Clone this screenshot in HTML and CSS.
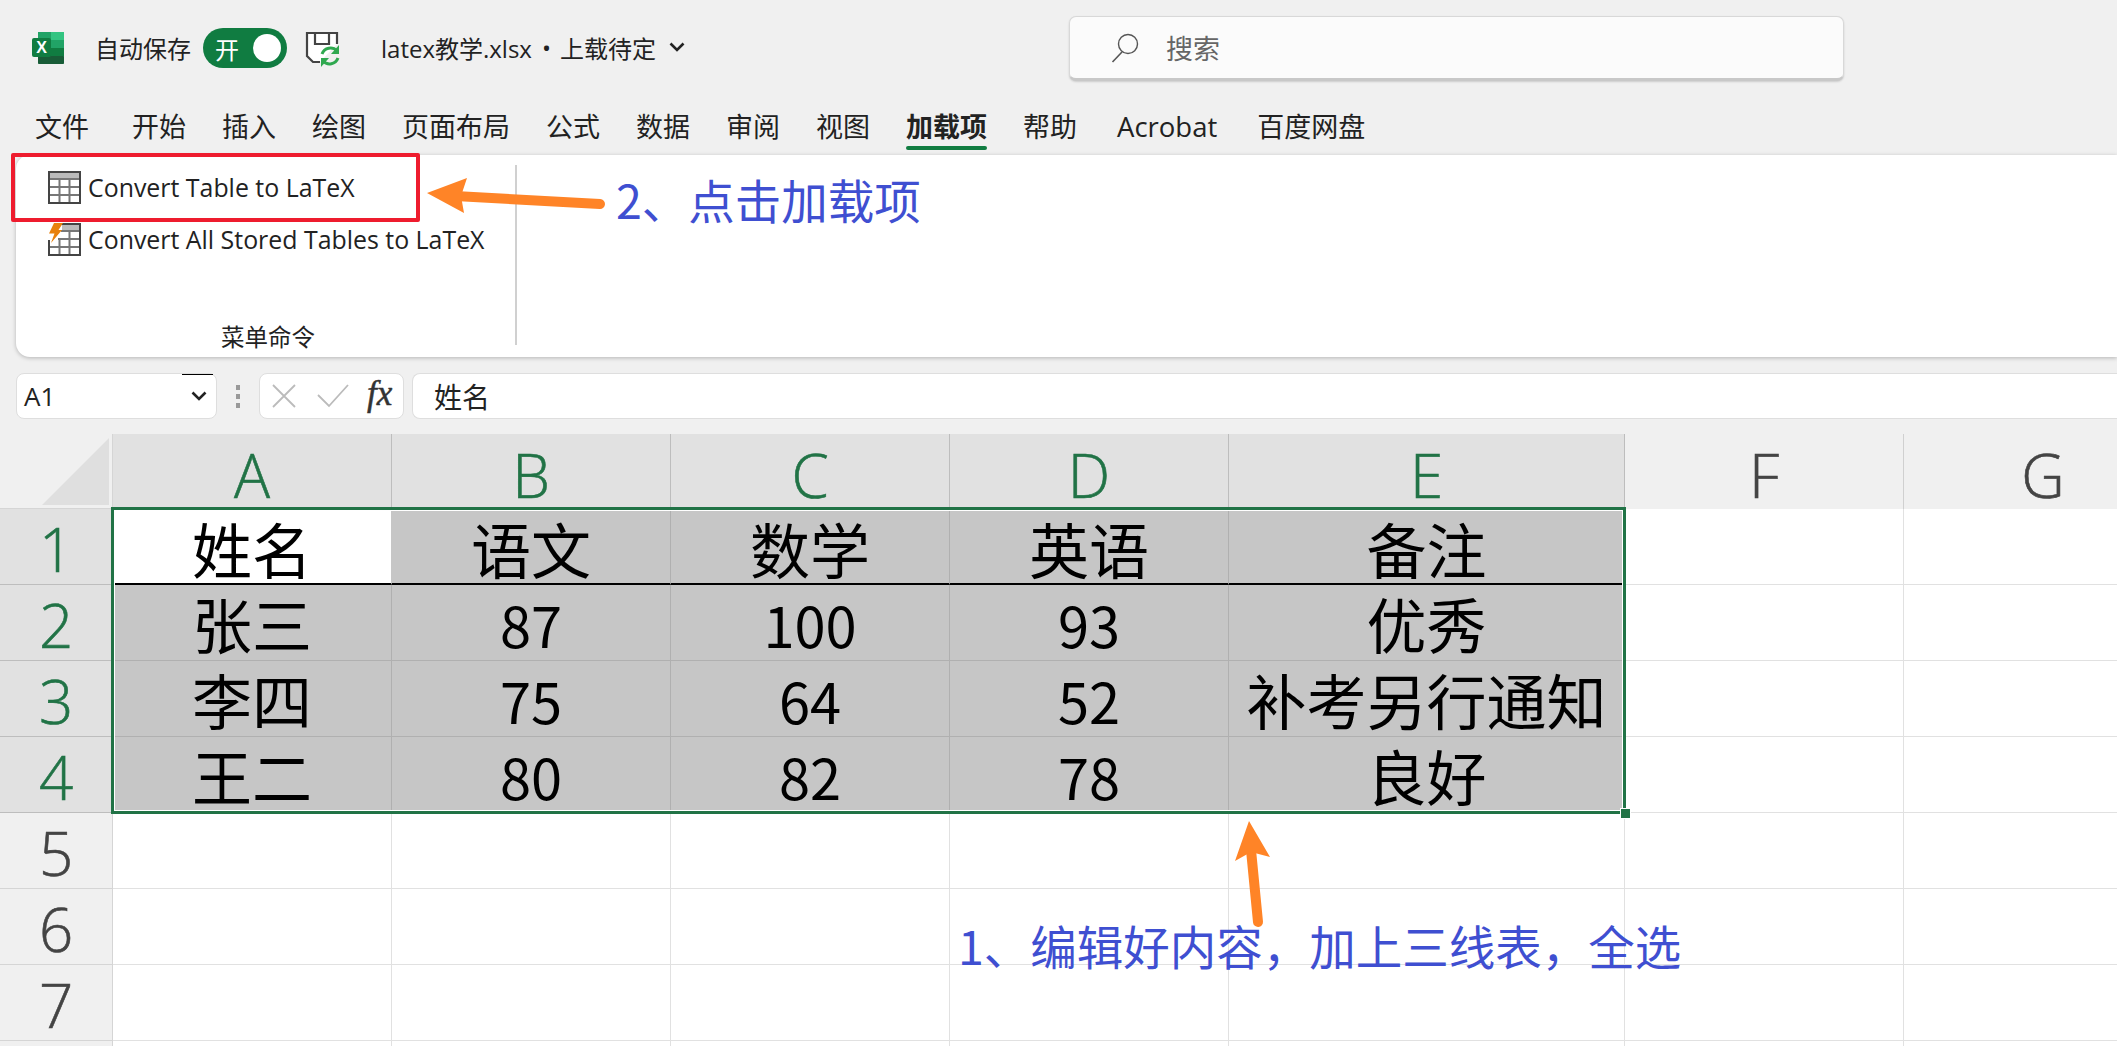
FILE: index.html
```html
<!DOCTYPE html>
<html lang="zh-CN">
<head>
    <meta charset="UTF-8">
    <title>latex教学.xlsx</title>
    <link rel="stylesheet" href="styles.css">
</head>
<body>
<div class="page">
    <header class="titlebar">
        <svg class="icon-excel" viewBox="0 0 32 32">
            <rect x="6" y="0" width="26" height="32" rx="2" fill="#21a366"/>
            <rect x="19" y="0" width="13" height="8" fill="#33c481"/>
            <rect x="6" y="0" width="13" height="8" fill="#21a366"/>
            <rect x="19" y="8" width="13" height="8" fill="#21a366"/>
            <rect x="6" y="8" width="13" height="8" fill="#107c41"/>
            <rect x="19" y="16" width="13" height="8" fill="#107c41"/>
            <rect x="6" y="16" width="13" height="8" fill="#185c37"/>
            <rect x="6" y="24" width="26" height="8" rx="1" fill="#185c37"/>
            <rect x="0" y="6" width="19" height="19" rx="2" fill="#107c41"/>
            <text x="9.5" y="21" class="excel-x">X</text>
        </svg>
        <span class="title-text autosave">自动保存</span>
        <div class="toggle"><span>开</span><i class="knob"></i></div>
        <svg class="icon-save" viewBox="0 0 48 48">
            <path d="M21 38H14L8 32V9H38V20" fill="#fff" stroke="#444" stroke-width="2.2"/>
            <path d="M16 9V20H30V9" fill="none" stroke="#444" stroke-width="2.2"/>
            <path d="M23 30A9 9 0 0 1 38 27" fill="none" stroke="#2fa84f" stroke-width="3"/>
            <path d="M40 21V30H32Z" fill="#2fa84f"/>
            <path d="M39 34A9 9 0 0 1 24 37" fill="none" stroke="#2fa84f" stroke-width="3"/>
            <path d="M22 43V34H30Z" fill="#2fa84f"/>
        </svg>
        <span class="title-text filename">latex教学.xlsx</span>
        <span class="title-text dot">•</span>
        <span class="title-text status">上载待定</span>
        <svg class="chevron" viewBox="0 0 16 10"><path d="M1.5 1.5L8 8L14.5 1.5" fill="none" stroke="#222" stroke-width="2.6"/></svg>
        <div class="search">
            <svg class="icon-search" viewBox="0 0 28 30">
                <circle cx="17" cy="11" r="9.5" fill="none" stroke="#555" stroke-width="1.4"/>
                <path d="M11 19L1.5 29" stroke="#555" stroke-width="1.6"/>
            </svg>
            <span>搜索</span>
        </div>
    </header>

    <nav class="tabs">
        <span class="tab tab-first">文件</span>
        <span class="tab">开始</span>
        <span class="tab">插入</span>
        <span class="tab">绘图</span>
        <span class="tab">页面布局</span>
        <span class="tab">公式</span>
        <span class="tab">数据</span>
        <span class="tab">审阅</span>
        <span class="tab">视图</span>
        <span class="tab tab-active">加载项</span>
        <span class="tab">帮助</span>
        <span class="tab tab-latin">Acrobat</span>
        <span class="tab">百度网盘</span>
    </nav>

    <section class="ribbon">
        <div class="group">
            <div class="command">
                <svg class="icon-table" viewBox="0 0 33 33">
                    <rect x="1" y="1" width="31" height="31" fill="#fff" stroke="#444" stroke-width="2"/>
                    <rect x="2" y="2" width="29" height="5" fill="#bbb"/>
                    <path d="M2 8H31M2 16H31M2 24H31M11.500 8V31M21.500 8V31" stroke="#777" stroke-width="2"/>
                </svg>
                <span>Convert Table to LaTeX</span>
            </div>
            <div class="command">
                <svg class="icon-table" viewBox="0 0 33 33">
                    <path d="M12 1H32V32H1V17" fill="#fff" stroke="#444" stroke-width="2"/>
                    <rect x="14" y="2" width="17" height="5" fill="#bbb"/>
                    <path d="M2 24H31M10 16H31M13 8H31M11.500 16V31M21.500 8V31" stroke="#777" stroke-width="2"/>
                    <path d="M6 0H15L10.500 7H14L3 20L6.500 10.500H1Z" fill="#e8810c"/>
                </svg>
                <span>Convert All Stored Tables to LaTeX</span>
            </div>
            <div class="group-label">菜单命令</div>
        </div>
    </section>

    <div class="formula-bar">
        <div class="namebox">
            <span>A1</span>
            <svg class="namebox-arrow" viewBox="0 0 16 10"><path d="M1.500 1.500L8 8L14.500 1.500" fill="none" stroke="#222" stroke-width="2.6"/></svg>
        </div>
        <div class="grip"><i></i><i></i><i></i></div>
        <div class="fx-box">
            <svg class="fx-icon" viewBox="0 0 24 24"><path d="M1 1L23 23M23 1L1 23" stroke="#bbb" stroke-width="1.8"/></svg>
            <svg class="fx-icon" viewBox="0 0 32 24"><path d="M1 11L12 22L31 1" fill="none" stroke="#bbb" stroke-width="1.8"/></svg>
            <span class="fx-label">fx</span>
        </div>
        <div class="formula-input">姓名</div>
    </div>

    <main class="sheet">
        <div class="corner"><i class="corner-mark"></i></div>
        <div class="col col-on">A</div>
        <div class="col col-on">B</div>
        <div class="col col-on">C</div>
        <div class="col col-on">D</div>
        <div class="col col-on">E</div>
        <div class="col">F</div>
        <div class="col">G</div>

        <div class="row row-on">1</div>
        <div class="cell cell-first head">姓名</div>
        <div class="cell cell-sel head">语文</div>
        <div class="cell cell-sel head">数学</div>
        <div class="cell cell-sel head">英语</div>
        <div class="cell cell-sel head">备注</div>
        <div class="cell"></div>
        <div class="cell"></div>

        <div class="row row-on">2</div>
        <div class="cell cell-sel">张三</div>
        <div class="cell cell-sel num">87</div>
        <div class="cell cell-sel num">100</div>
        <div class="cell cell-sel num">93</div>
        <div class="cell cell-sel">优秀</div>
        <div class="cell"></div>
        <div class="cell"></div>

        <div class="row row-on">3</div>
        <div class="cell cell-sel">李四</div>
        <div class="cell cell-sel num">75</div>
        <div class="cell cell-sel num">64</div>
        <div class="cell cell-sel num">52</div>
        <div class="cell cell-sel">补考另行通知</div>
        <div class="cell"></div>
        <div class="cell"></div>

        <div class="row row-on">4</div>
        <div class="cell cell-sel">王二</div>
        <div class="cell cell-sel num">80</div>
        <div class="cell cell-sel num">82</div>
        <div class="cell cell-sel num">78</div>
        <div class="cell cell-sel">良好</div>
        <div class="cell"></div>
        <div class="cell"></div>

        <div class="row">5</div>
        <div class="cell"></div><div class="cell"></div><div class="cell"></div><div class="cell"></div><div class="cell"></div><div class="cell"></div><div class="cell"></div>
        <div class="row">6</div>
        <div class="cell"></div><div class="cell"></div><div class="cell"></div><div class="cell"></div><div class="cell"></div><div class="cell"></div><div class="cell"></div>
        <div class="row">7</div>
        <div class="cell"></div><div class="cell"></div><div class="cell"></div><div class="cell"></div><div class="cell"></div><div class="cell"></div><div class="cell"></div>
        <div class="row"></div>
        <div class="cell"></div><div class="cell"></div><div class="cell"></div><div class="cell"></div><div class="cell"></div><div class="cell"></div><div class="cell"></div>

        <div class="selection"><i class="handle"></i></div>
    </main>

    <!-- annotations drawn on top of the screenshot -->
    <div class="red-box"></div>
    <svg class="arrows" viewBox="0 0 2117 1046">
        <path d="M600 204L455 196" stroke="#ff8427" stroke-width="10" stroke-linecap="round"/>
        <path d="M427 193L467 178L461 196L464 213Z" fill="#ff8427"/>
        <path d="M1258 922L1251 850" stroke="#ff8427" stroke-width="10" stroke-linecap="round"/>
        <path d="M1249 821L1270 857L1251 852L1235 861Z" fill="#ff8427"/>
    </svg>
    <div class="note note-two">2、点击加载项</div>
    <div class="note note-one">1、编辑好内容，加上三线表，全选</div>
</div>
</body>
</html>
```
FILE: styles.css
```css
* {
    margin: 0;
    padding: 0;
    box-sizing: border-box;
}

html, body {
    height: 100%;
    overflow: hidden;
}

body {
    font-family: 'Open Sans', 'Noto Sans CJK SC', sans-serif;
    background: #f0f0f0;
    color: #222;
}

.page {
    position: relative;
    width: 2117px;
    height: 1046px;
    overflow: hidden;
}

/* title bar */
.titlebar {
    display: flex;
    align-items: center;
    height: 96px;
    padding-left: 32px;
    font-size: 24px;
}

.title-text {
    margin-top: -2px;
}

.icon-excel {
    width: 32px;
    height: 32px;
}

.excel-x {
    font-family: 'Liberation Sans', sans-serif;
    font-size: 16px;
    font-weight: bold;
    fill: #fff;
    text-anchor: middle;
}

.autosave {
    margin-left: 31px;
}

.toggle {
    display: flex;
    align-items: center;
    justify-content: space-between;
    width: 84px;
    height: 40px;
    margin-left: 12px;
    padding: 0 6px 0 12px;
    border-radius: 20px;
    background: #107c41;
    color: #fff;
}

.knob {
    width: 28px;
    height: 28px;
    border-radius: 50%;
    background: #fff;
}

.icon-save {
    width: 48px;
    height: 48px;
    margin-left: 12px;
}

.filename {
    margin-left: 34px;
}

.dot {
    margin-left: 10px;
}

.status {
    margin-left: 9px;
}

.chevron {
    width: 16px;
    height: 10px;
    margin-left: 13px;
    margin-top: -2px;
}

.search {
    display: flex;
    align-items: center;
    position: absolute;
    left: 1069px;
    top: 16px;
    width: 775px;
    height: 65px;
    padding-left: 41px;
    border: 1px solid #d8d8d8;
    border-bottom: 3px solid #c8c8c8;
    border-radius: 7px;
    background: #fbfbfb;
    color: #666;
    font-size: 27px;
    box-shadow: 0 1px 2px rgba(0, 0, 0, 0.15);
}

.icon-search {
    width: 28px;
    height: 30px;
    margin-right: 27px;
}

/* tabs */
.tabs {
    display: flex;
    gap: 36px;
    height: 59px;
    padding-left: 35px;
    font-size: 27px;
    line-height: 62px;
}

.tab {
    position: relative;
    height: 59px;
    white-space: nowrap;
}

.tab-first {
    margin-right: 7px;
}

.tab-latin {
    margin: 0 4px;
    font-size: 27.500px;
}

.tab-active {
    font-weight: bold;
}

.tab-active::after {
    content: "";
    position: absolute;
    left: 0;
    right: 0;
    bottom: 5px;
    height: 4px;
    border-radius: 2px;
    background: #107c41;
}

/* ribbon */
.ribbon {
    height: 202px;
    margin-left: 16px;
    padding-top: 6px;
    border-radius: 14px 0 0 14px;
    background: #fff;
    box-shadow: 0 1px 4px rgba(0, 0, 0, 0.25);
}

.group {
    position: relative;
    width: 501px;
    height: 184px;
    padding-left: 32px;
    font-size: 24.900px;
}

.group::after {
    content: "";
    position: absolute;
    top: 4px;
    right: 0;
    bottom: 0;
    width: 2px;
    background: #d0d0d0;
}

.command {
    display: flex;
    align-items: center;
    gap: 7px;
    height: 52px;
    white-space: nowrap;
}

.icon-table {
    width: 33px;
    height: 33px;
}

.group-label {
    position: absolute;
    bottom: -8px;
    left: 3px;
    right: 0;
    font-size: 23.500px;
    text-align: center;
}

/* formula bar */
.formula-bar {
    display: flex;
    height: 46px;
    margin: 16px 0 15px 16px;
}

.namebox, .fx-box, .formula-input {
    display: flex;
    align-items: center;
    border: 1px solid #dedede;
    border-radius: 8px;
    background: #fff;
}

.namebox {
    position: relative;
    justify-content: space-between;
    width: 201px;
    padding: 0 9px 0 7px;
    font-size: 26px;
}

.namebox::before {
    content: "";
    position: absolute;
    top: 0;
    left: 165px;
    width: 31px;
    height: 1px;
    background: #000;
}

.namebox-arrow {
    width: 16px;
    height: 10px;
}

.grip {
    display: flex;
    flex-direction: column;
    justify-content: center;
    gap: 4px;
    width: 42px;
    align-items: center;
}

.grip i {
    width: 4px;
    height: 5px;
    background: #999;
}

.fx-box {
    width: 145px;
    padding-left: 12px;
    margin-right: 8px;
}

.fx-icon {
    height: 24px;
    width: auto;
    margin-right: 21px;
}

.fx-icon + .fx-icon {
    margin-right: 18px;
}

.fx-label {
    font-family: 'Liberation Serif', serif;
    font-style: italic;
    font-size: 35px;
    color: #333;
    margin-top: -4px;
    -webkit-text-stroke: 0.5px #333;
}

.formula-input {
    flex: 1;
    padding-left: 21px;
    border-right: 0;
    border-radius: 8px 0 0 8px;
    font-size: 28px;
}

/* sheet */
.sheet {
    position: relative;
    display: grid;
    grid-template-columns: 113px 279px 279px 279px 279px 396px 279px 279px;
    grid-template-rows: 75px repeat(8, 76px);
}

.corner {
    position: relative;
    border-right: 1px solid #d5d5d5;
    border-bottom: 1px solid #d5d5d5;
}

.corner-mark {
    position: absolute;
    top: 4px;
    left: 42px;
    width: 67px;
    height: 67px;
    background: #dfdfdf;
    clip-path: polygon(100% 0, 100% 100%, 0 100%);
}

.col, .row {
    display: flex;
    align-items: center;
    justify-content: center;
    font-family: 'Open Sans', sans-serif;
    font-weight: 300;
    font-size: 60px;
    line-height: 1;
    color: #444;
    -webkit-text-stroke: 0.6px;
}

.col {
    border-right: 1px solid #d0d0d0;
    padding-top: 6px;
}

.row {
    border-bottom: 1px solid #d5d5d5;
    border-right: 1px solid #d5d5d5;
    padding-top: 4px;
}

.col-on {
    background: #e1e1e1;
    border-right-color: #bdbdbd;
    color: #217346;
}

.row-on {
    background: #e1e1e1;
    border-bottom-color: #bdbdbd;
    color: #217346;
}

.cell {
    display: flex;
    align-items: center;
    justify-content: center;
    border-right: 1px solid #e1e1e1;
    border-bottom: 1px solid #e1e1e1;
    font-family: 'Noto Sans CJK SC', sans-serif;
    font-size: 60px;
    line-height: 1;
    color: #000;
    background: #fff;
    white-space: nowrap;
}

.cell-sel {
    background: #c6c6c6;
    border-color: #b0b0b0;
}

.cell-first {
    background: #fff;
    border-right-color: #c6c6c6;
}

.head {
    border-bottom: 2px solid #000;
    padding-top: 4px;
}

.num {
    font-size: 56px;
    padding-top: 3px;
}

.selection {
    position: absolute;
    left: 111px;
    top: 73px;
    width: 1515px;
    height: 307px;
    border: 3px solid #217346;
    box-shadow: inset 0 0 0 1px #fff;
    pointer-events: none;
}

.handle {
    position: absolute;
    right: -8px;
    bottom: -8px;
    width: 11px;
    height: 11px;
    background: #217346;
    border: 1px solid #fff;
}

/* annotations */
.red-box {
    position: absolute;
    left: 11px;
    top: 153px;
    width: 409px;
    height: 69px;
    border: 4px solid #ee1c2e;
    border-radius: 2px;
}

.arrows {
    position: absolute;
    top: 0;
    left: 0;
    width: 2117px;
    height: 1046px;
}

.note {
    position: absolute;
    font-family: 'Noto Sans CJK SC', sans-serif;
    font-size: 46.500px;
    line-height: 60px;
    color: #3f4fd1;
    white-space: nowrap;
}

.note-two {
    left: 616px;
    top: 169px;
}

.note-one {
    left: 958px;
    top: 915px;
}
```
